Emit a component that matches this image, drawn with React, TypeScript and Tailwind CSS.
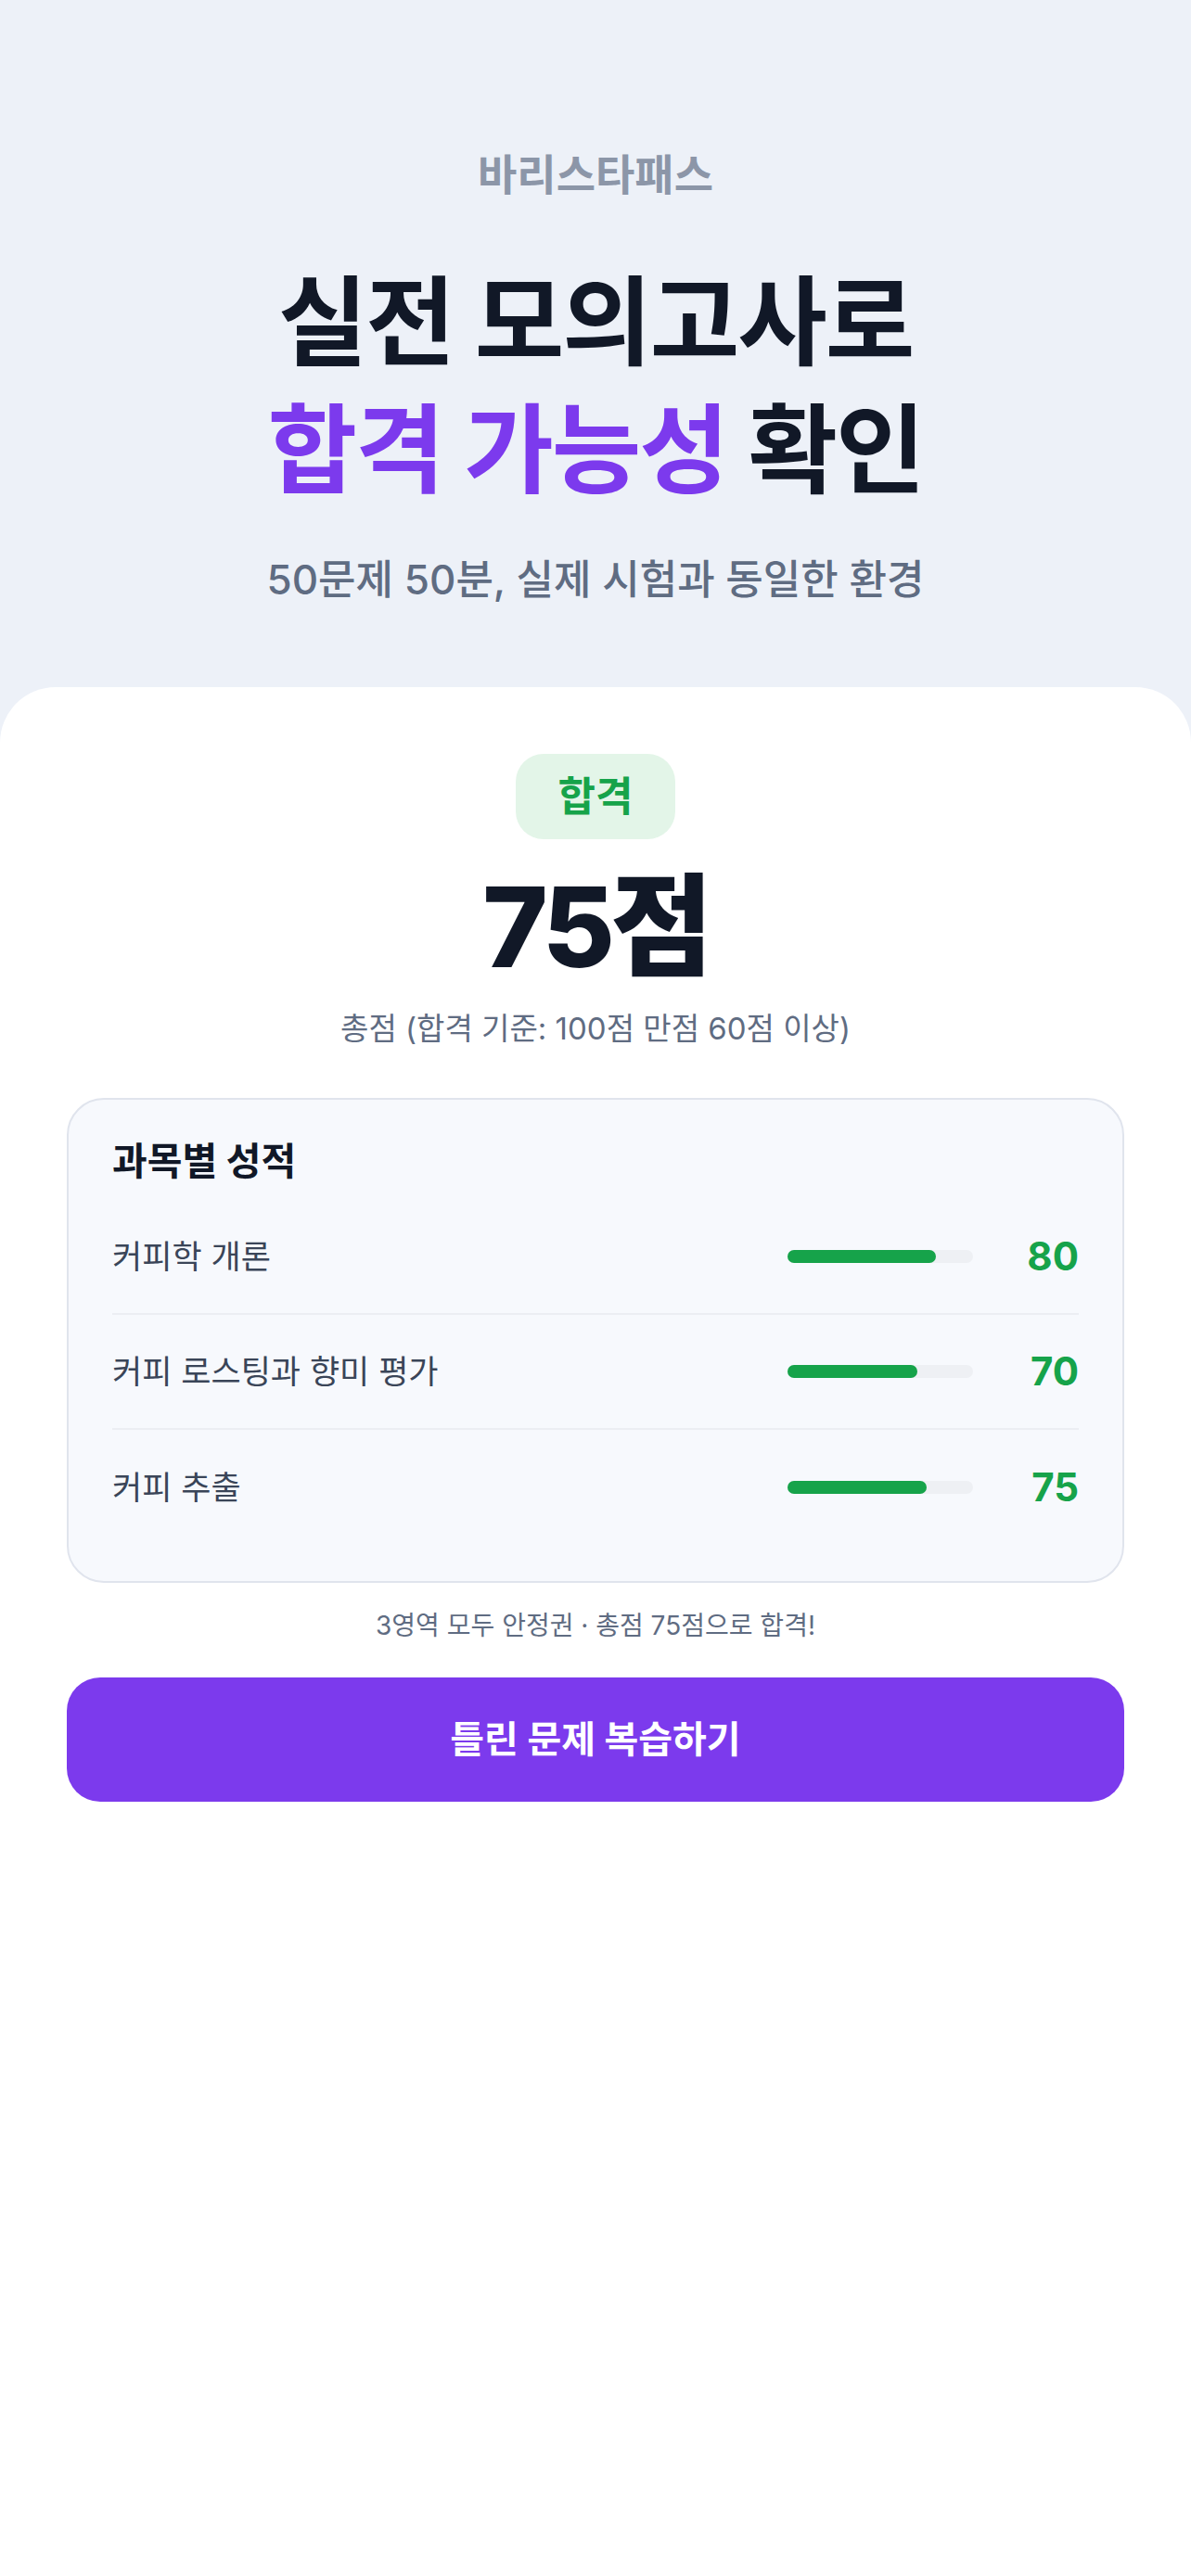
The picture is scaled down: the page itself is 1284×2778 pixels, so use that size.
const subjects = [
  { name: "커피학 개론", score: 80 },
  { name: "커피 로스팅과 향미 평가", score: 70 },
  { name: "커피 추출", score: 75 },
];

export default function App() {
  return (
    <div className="flex min-h-screen flex-col bg-[#edf1f8] font-['Inter','Noto_Sans_CJK_KR',sans-serif]">
      {/* Hero */}
      <section className="pt-[158px] pb-[84px] text-center">
        <p className="text-[46px] leading-[60px] font-bold text-[#8c96a8]">
          바리스타패스
        </p>
        <h1 className="mt-[60px] text-[105px] leading-[138px] font-bold tracking-[-0.02em] text-[#111827]">
          실전 모의고사로
          <br />
          <span className="text-[#7c3aed]">합격 가능성</span> 확인
        </h1>
        <p className="mt-[40px] text-[44px] leading-[63px] font-medium text-[#5f6c82]">
          50문제 50분, 실제 시험과 동일한 환경
        </p>
      </section>

      {/* Result sheet */}
      <section className="flex-1 rounded-t-[60px] bg-white pt-[72px] pb-[80px]">
        <div className="flex flex-col items-center">
          <span className="rounded-[30px] bg-[#e3f5e8] px-[46px] text-[44px] leading-[92px] font-bold text-[#16a34a]">
            합격
          </span>
          <p className="mt-[35px] text-[120px] leading-[120px] font-extrabold tracking-[-0.04em] text-[#111827]">
            75점
          </p>
          <p className="mt-[26px] text-[33px] leading-[46px] text-[#5f6c82]">
            총점 (합격 기준: 100점 만점 60점 이상)
          </p>
        </div>

        <div className="mx-[72px] mt-[52px] rounded-[40px] border-2 border-[#e0e4ed] bg-[#f7f9fd] px-[47px] pt-[39px] pb-[39px]">
          <h2 className="text-[41px] leading-[54px] font-bold text-[#111827]">
            과목별 성적
          </h2>
          <div className="mt-[15px]">
            {subjects.map((s, i) => (
              <div
                key={s.name}
                className={`flex h-[124px] items-center ${
                  i < subjects.length - 1 ? "border-b-2 border-[#eceef3]" : ""
                }`}
              >
                <span className="flex-1 text-[35px] leading-[48px] text-[#3a4558]">
                  {s.name}
                </span>
                <div className="h-[14px] w-[200px] rounded-full bg-[#eef0f4]">
                  <div
                    className="h-full rounded-full bg-[#16a34a]"
                    style={{ width: `${s.score}%` }}
                  />
                </div>
                <span className="w-[114px] text-right text-[42px] leading-[54px] font-bold text-[#16a34a]">
                  {s.score}
                </span>
              </div>
            ))}
          </div>
        </div>

        <p className="mt-[27px] text-center text-[28px] leading-[38px] text-[#5f6c82]">
          3영역 모두 안정권 · 총점 75점으로 합격!
        </p>

        <button className="mx-[72px] mt-[37px] flex h-[134px] w-[1140px] items-center justify-center rounded-[36px] bg-[#7c3aed] text-[40px] font-bold text-white">
          틀린 문제 복습하기
        </button>
      </section>
    </div>
  );
}
